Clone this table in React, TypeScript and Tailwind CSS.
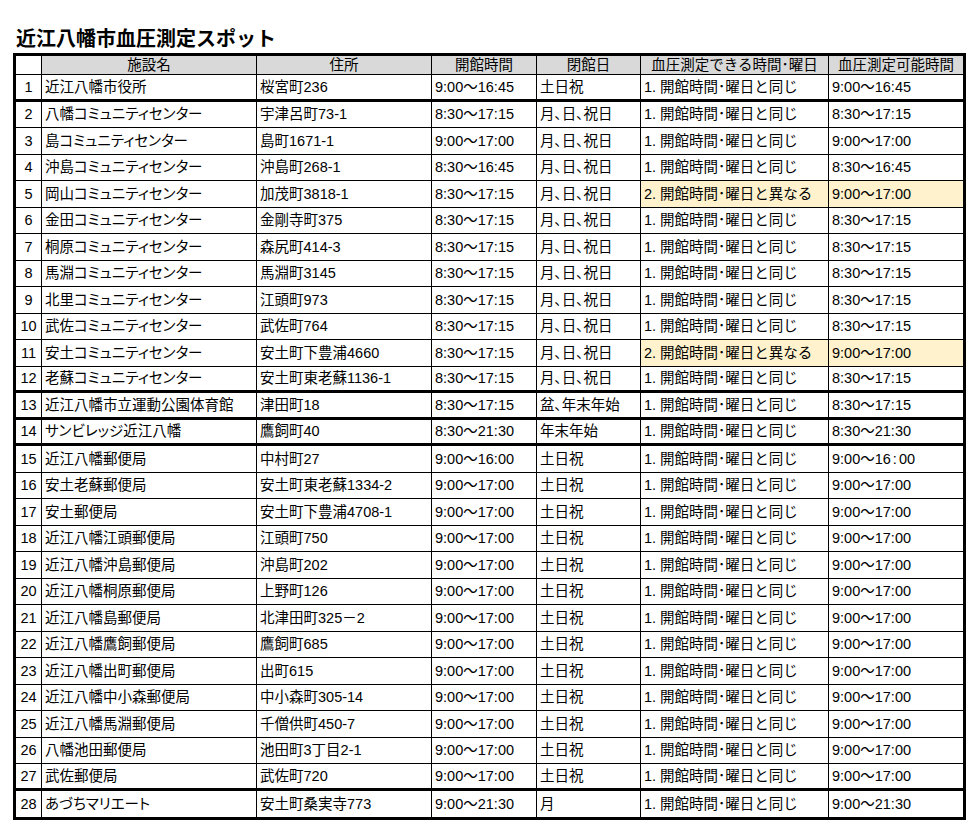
import type { ReactNode } from "react";

const SAME = "1. 開館時間･曜日と同じ";
const DIFF = "2. 開館時間･曜日と異なる";
const MON = "月、日、祝日";
const WKND = "土日祝";

type Row = {
  name: string;
  addr: string;
  hours: string;
  closed: string;
  mode: string;
  time: ReactNode;
  thick?: boolean;
  hl?: boolean;
};

const rows: Row[] = [
  { name: "近江八幡市役所", addr: "桜宮町236", hours: "9:00～16:45", closed: WKND, mode: SAME, time: "9:00～16:45", thick: true },
  { name: "八幡コミュニティセンター", addr: "宇津呂町73-1", hours: "8:30～17:15", closed: MON, mode: SAME, time: "8:30～17:15" },
  { name: "島コミュニティセンター", addr: "島町1671-1", hours: "9:00～17:00", closed: MON, mode: SAME, time: "9:00～17:00" },
  { name: "沖島コミュニティセンター", addr: "沖島町268-1", hours: "8:30～16:45", closed: MON, mode: SAME, time: "8:30～16:45" },
  { name: "岡山コミュニティセンター", addr: "加茂町3818-1", hours: "8:30～17:15", closed: MON, mode: DIFF, time: "9:00～17:00", hl: true },
  { name: "金田コミュニティセンター", addr: "金剛寺町375", hours: "8:30～17:15", closed: MON, mode: SAME, time: "8:30～17:15" },
  { name: "桐原コミュニティセンター", addr: "森尻町414-3", hours: "8:30～17:15", closed: MON, mode: SAME, time: "8:30～17:15" },
  { name: "馬淵コミュニティセンター", addr: "馬淵町3145", hours: "8:30～17:15", closed: MON, mode: SAME, time: "8:30～17:15" },
  { name: "北里コミュニティセンター", addr: "江頭町973", hours: "8:30～17:15", closed: MON, mode: SAME, time: "8:30～17:15" },
  { name: "武佐コミュニティセンター", addr: "武佐町764", hours: "8:30～17:15", closed: MON, mode: SAME, time: "8:30～17:15" },
  { name: "安土コミュニティセンター", addr: "安土町下豊浦4660", hours: "8:30～17:15", closed: MON, mode: DIFF, time: "9:00～17:00", hl: true },
  { name: "老蘇コミュニティセンター", addr: "安土町東老蘇1136-1", hours: "8:30～17:15", closed: MON, mode: SAME, time: "8:30～17:15", thick: true },
  { name: "近江八幡市立運動公園体育館", addr: "津田町18", hours: "8:30～17:15", closed: "盆、年末年始", mode: SAME, time: "8:30～17:15", thick: true },
  { name: "サンビレッジ近江八幡", addr: "鷹飼町40", hours: "8:30～21:30", closed: "年末年始", mode: SAME, time: "8:30～21:30", thick: true },
  {
    name: "近江八幡郵便局",
    addr: "中村町27",
    hours: "9:00～16:00",
    closed: WKND,
    mode: SAME,
    time: (
      <>
        9:00～16<span className="px-[2px]">:</span>00
      </>
    ),
  },
  { name: "安土老蘇郵便局", addr: "安土町東老蘇1334-2", hours: "9:00～17:00", closed: WKND, mode: SAME, time: "9:00～17:00" },
  { name: "安土郵便局", addr: "安土町下豊浦4708-1", hours: "9:00～17:00", closed: WKND, mode: SAME, time: "9:00～17:00" },
  { name: "近江八幡江頭郵便局", addr: "江頭町750", hours: "9:00～17:00", closed: WKND, mode: SAME, time: "9:00～17:00" },
  { name: "近江八幡沖島郵便局", addr: "沖島町202", hours: "9:00～17:00", closed: WKND, mode: SAME, time: "9:00～17:00" },
  { name: "近江八幡桐原郵便局", addr: "上野町126", hours: "9:00～17:00", closed: WKND, mode: SAME, time: "9:00～17:00" },
  { name: "近江八幡島郵便局", addr: "北津田町325－2", hours: "9:00～17:00", closed: WKND, mode: SAME, time: "9:00～17:00" },
  { name: "近江八幡鷹飼郵便局", addr: "鷹飼町685", hours: "9:00～17:00", closed: WKND, mode: SAME, time: "9:00～17:00" },
  { name: "近江八幡出町郵便局", addr: "出町615", hours: "9:00～17:00", closed: WKND, mode: SAME, time: "9:00～17:00" },
  { name: "近江八幡中小森郵便局", addr: "中小森町305-14", hours: "9:00～17:00", closed: WKND, mode: SAME, time: "9:00～17:00" },
  { name: "近江八幡馬淵郵便局", addr: "千僧供町450-7", hours: "9:00～17:00", closed: WKND, mode: SAME, time: "9:00～17:00" },
  { name: "八幡池田郵便局", addr: "池田町3丁目2-1", hours: "9:00～17:00", closed: WKND, mode: SAME, time: "9:00～17:00" },
  { name: "武佐郵便局", addr: "武佐町720", hours: "9:00～17:00", closed: WKND, mode: SAME, time: "9:00～17:00", thick: true },
  { name: "あづちマリエート", addr: "安土町桑実寺773", hours: "9:00～21:30", closed: "月", mode: SAME, time: "9:00～21:30" },
];

const cols = "grid grid-cols-[26px_215px_175px_105px_104px_188px_134px]";
const cell = "flex items-center pl-[3px] border-r border-black whitespace-nowrap overflow-hidden";
// proportional kana / punctuation, like the sheet's P-gothic font
const palt = "[font-feature-settings:'palt']";

export default function App() {
  return (
    <div className="min-h-[832px] bg-white pt-[24px] font-['Liberation_Sans','Noto_Sans_CJK_JP',sans-serif] text-black">
      <h1 className="pl-[16px] text-[20px] font-bold leading-[28px] font-['Noto_Sans_CJK_JP',sans-serif]">
        近江八幡市血圧測定スポット
      </h1>

      <div className="ml-[13px] mt-px w-[953px] border-[3px] border-black text-[14.5px] leading-none">
        {/* header */}
        <div className={`${cols} h-[19px] border-b border-black`}>
          <div className="border-r border-black bg-white" />
          {["施設名", "住所", "開館時間", "閉館日", "血圧測定できる時間･曜日", "血圧測定可能時間"].map((h, i) => (
            <div
              key={h}
              className={`flex items-center justify-center bg-[#d9d9d9] whitespace-nowrap ${i < 5 ? "border-r border-black" : ""}`}
            >
              {h}
            </div>
          ))}
        </div>

        {rows.map((r, i) => {
          const last = i === rows.length - 1;
          // rows sit on a ~26.5px pitch, so alternate 27/26
          const h = last ? "h-[26px]" : i % 2 === 0 ? "h-[27px]" : "h-[26px]";
          const b = last ? "" : r.thick ? "border-b-[3px] border-black" : "border-b border-black";
          return (
            <div key={i} className={`${cols} ${h} ${b}`}>
              <div className="flex items-center justify-center border-r border-black">{i + 1}</div>
              <div className={`${cell} ${palt}`}>{r.name}</div>
              <div className={cell}>{r.addr}</div>
              <div className={cell}>{r.hours}</div>
              <div className={`${cell} ${palt}`}>{r.closed}</div>
              <div className={`${cell} ${r.hl ? "bg-[#fff2cc]" : ""}`}>{r.mode}</div>
              <div className={`flex items-center pl-[3px] whitespace-nowrap ${r.hl ? "bg-[#fff2cc]" : ""}`}>{r.time}</div>
            </div>
          );
        })}
      </div>
    </div>
  );
}
